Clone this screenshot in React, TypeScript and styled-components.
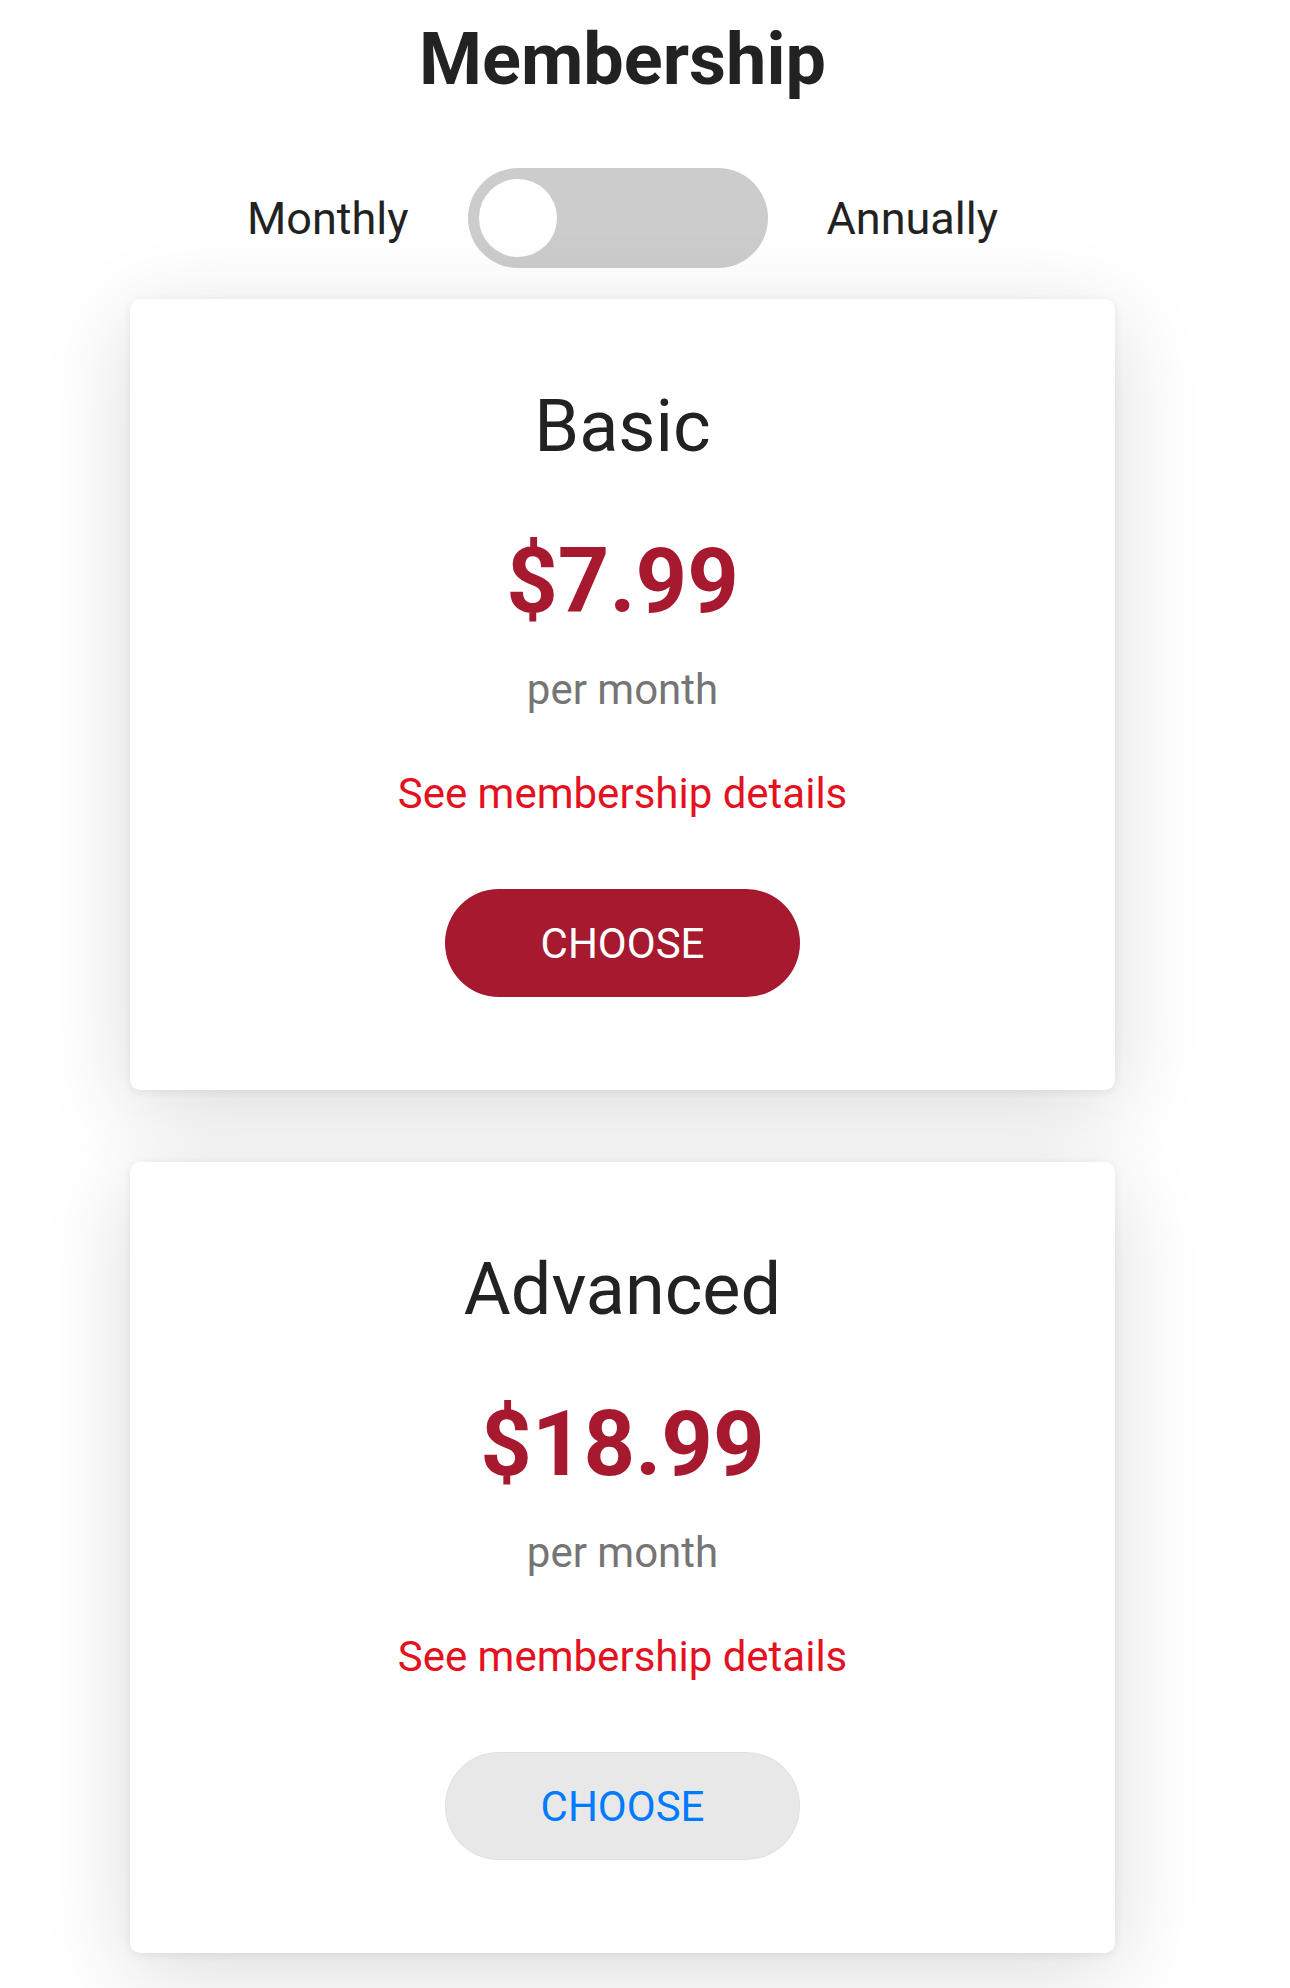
import React, { useState } from 'react';
import styled, { createGlobalStyle } from 'styled-components';

const GlobalStyle = createGlobalStyle`
  body {
    margin: 0;
    background: #ffffff;
    font-family: Roboto, "Liberation Sans", Arial, sans-serif;
    color: #222222;
  }
`;

type Plan = {
  name: string;
  price: string;
  primary?: boolean;
};

const plans: Plan[] = [
  { name: 'Basic', price: '$7.99', primary: true },
  { name: 'Advanced', price: '$18.99' },
];

export default function App() {
  const [annual, setAnnual] = useState(false);

  return (
    <>
      <GlobalStyle />
      <Page>
        <Title>Membership</Title>
        <ToggleRow>
          <PeriodLabel>Monthly</PeriodLabel>
          <Switch
            type="button"
            aria-pressed={annual}
            $on={annual}
            onClick={() => setAnnual(!annual)}
          >
            <Knob />
          </Switch>
          <PeriodLabel>Annually</PeriodLabel>
        </ToggleRow>
        <CardList>
          {plans.map((plan) => (
            <Card key={plan.name}>
              <PlanName>{plan.name}</PlanName>
              <Price>{plan.price}</Price>
              <Period>per month</Period>
              <DetailsLink href="#">See membership details</DetailsLink>
              <ChooseButton type="button" $primary={plan.primary}>
                CHOOSE
              </ChooseButton>
            </Card>
          ))}
        </CardList>
      </Page>
    </>
  );
}

const Page = styled.main`
  width: 1245px;
  min-height: 1988px;
  box-sizing: border-box;
  padding-top: 17px;
  display: flex;
  flex-direction: column;
  align-items: center;
`;

const Title = styled.h1`
  margin: 0;
  font-size: 72px;
  line-height: 86px;
  font-weight: 700;
  color: #222222;
`;

const ToggleRow = styled.div`
  margin-top: 65px;
  display: flex;
  align-items: center;
  gap: 59px;
`;

const PeriodLabel = styled.span`
  font-size: 45px;
  line-height: 53px;
  color: #222222;
`;

const Switch = styled.button<{ $on: boolean }>`
  width: 300px;
  height: 100px;
  border: none;
  border-radius: 50px;
  padding: 0 11px;
  box-sizing: border-box;
  background: ${(p) => (p.$on ? '#a6192e' : '#cccccc')};
  display: flex;
  align-items: center;
  justify-content: ${(p) => (p.$on ? 'flex-end' : 'flex-start')};
  cursor: pointer;
`;

const Knob = styled.span`
  width: 78px;
  height: 78px;
  border-radius: 50%;
  background: #ffffff;
`;

const CardList = styled.div`
  margin-top: 31px;
  display: flex;
  flex-direction: column;
  gap: 72px;
`;

const Card = styled.section`
  width: 985px;
  height: 791px;
  box-sizing: border-box;
  padding-top: 86px;
  background: #ffffff;
  border-radius: 10px;
  box-shadow: 0 2px 10px rgba(0, 0, 0, 0.07), 0 20px 90px rgba(0, 0, 0, 0.14);
  display: flex;
  flex-direction: column;
  align-items: center;
`;

const PlanName = styled.h2`
  margin: 0;
  font-size: 72px;
  line-height: 84px;
  font-weight: 400;
  color: #222222;
`;

const Price = styled.div`
  margin-top: 59px;
  font-size: 90px;
  line-height: 108px;
  font-weight: 700;
  color: #a6192e;
`;

const Period = styled.div`
  margin-top: 29px;
  font-size: 42px;
  line-height: 50px;
  color: #757575;
`;

const DetailsLink = styled.a`
  margin-top: 54px;
  font-size: 42px;
  line-height: 50px;
  color: #e4111f;
  text-decoration: none;
`;

const ChooseButton = styled.button<{ $primary?: boolean }>`
  margin-top: 70px;
  width: 355px;
  height: 108px;
  border: 1px solid ${(p) => (p.$primary ? 'rgba(166, 25, 46, 0.25)' : 'rgba(0, 0, 0, 0.03)')};
  border-radius: 54px;
  background: ${(p) => (p.$primary ? '#a6192e' : '#e8e8e8')};
  color: ${(p) => (p.$primary ? '#ffffff' : '#007aff')};
  font-family: Roboto, "Liberation Sans", Arial, sans-serif;
  font-size: 42px;
  font-weight: 400;
  cursor: pointer;
`;
